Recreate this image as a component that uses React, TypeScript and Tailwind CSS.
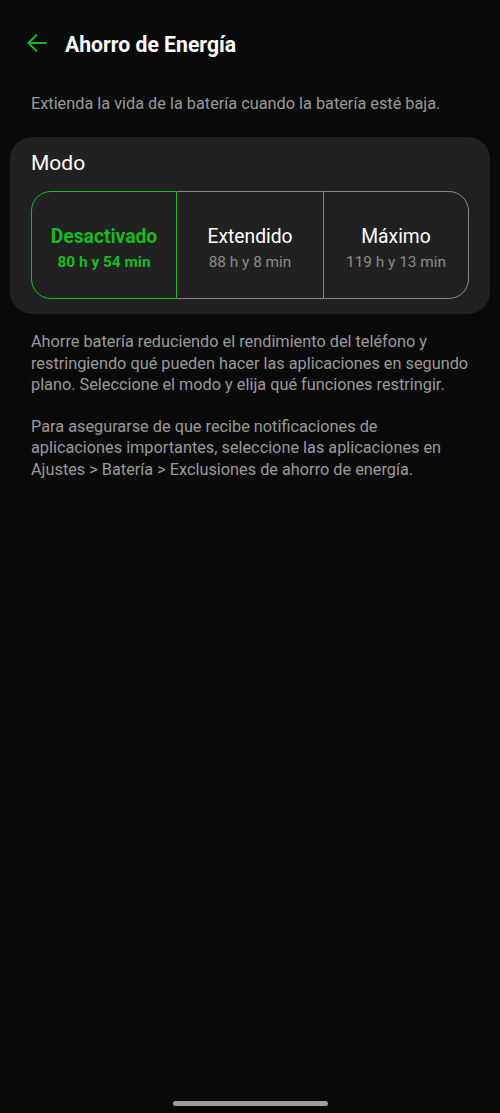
import React, { useState } from "react";

const modes = [
  { name: "Desactivado", time: "80 h y 54 min" },
  { name: "Extendido", time: "88 h y 8 min" },
  { name: "Máximo", time: "119 h y 13 min" },
];

// border / rounding for each segment of the mode picker
const segmentShape = [
  "rounded-l-[20px] border-[1.5px]",
  "border-y-[1.5px]",
  "rounded-r-[20px] border-[1.5px]",
];

const App: React.FC = () => {
  const [active, setActive] = useState(0);

  return (
    <div
      className="w-[500px] h-[1113px] bg-[#0a0a0a] flex flex-col overflow-hidden"
      style={{ fontFamily: "Roboto, 'Liberation Sans', sans-serif" }}
    >
      {/* header */}
      <div className="flex items-center h-[28px] mt-[31px] pl-[27px]">
        <svg className="mb-[4px]" width="20" height="20" viewBox="0 0 20 20" fill="none" stroke="#14bd1e" strokeWidth="1.8" strokeLinecap="round" strokeLinejoin="round">
          <path d="M19 10H1.5" />
          <path d="M9.5 2L1.5 10L9.5 18" />
        </svg>
        <h1 className="ml-[18px] text-[21.2px] leading-[28px] font-bold text-white">Ahorro de Energía</h1>
      </div>

      <p className="mt-[34px] pl-[31px] text-[16.3px] leading-[21.3px] text-[#9a9a9a]">
        Extienda la vida de la batería cuando la batería esté baja.
      </p>

      {/* mode card */}
      <div className="mx-[10px] mt-[23px] rounded-[22px] bg-[#212121] px-[21px] pt-[13px] pb-[15px]">
        <div className="text-[21px] leading-[26px] text-white">Modo</div>
        <div className="mt-[15px] flex h-[108px]">
          {modes.map((m, i) => {
            const on = i === active;
            return (
              <button
                key={m.name}
                onClick={() => setActive(i)}
                className={`w-[146px] flex flex-col items-center pt-[33px] ${segmentShape[i]} ${
                  on ? "border-[#14bd1e]" : "border-[#8a8a8a]"
                }`}
              >
                <span
                  className={`text-[19.3px] leading-[24px] ${on ? "font-bold text-[#14bd1e]" : "text-white"}`}
                >
                  {m.name}
                </span>
                <span
                  className={`mt-[3px] text-[15.4px] leading-[20px] ${on ? "font-bold text-[#14bd1e]" : "text-[#8c8c8c]"}`}
                >
                  {m.time}
                </span>
              </button>
            );
          })}
        </div>
      </div>

      <div className="mt-[17px] px-[31px] text-[16.3px] leading-[21.3px] text-[#9a9a9a]">
        <p>
          Ahorre batería reduciendo el rendimiento del teléfono y restringiendo qué pueden hacer las aplicaciones en segundo plano. Seleccione el modo y elija qué funciones restringir.
        </p>
        <p className="mt-[21px]">
          Para asegurarse de que recibe notificaciones de aplicaciones importantes, seleccione las aplicaciones en Ajustes &gt; Batería &gt; Exclusiones de ahorro de energía.
        </p>
      </div>

      <div className="mt-auto mb-[7px] mx-auto w-[155px] h-[5px] rounded-full bg-[#9e9e9e]" />
    </div>
  );
};

export default App;
